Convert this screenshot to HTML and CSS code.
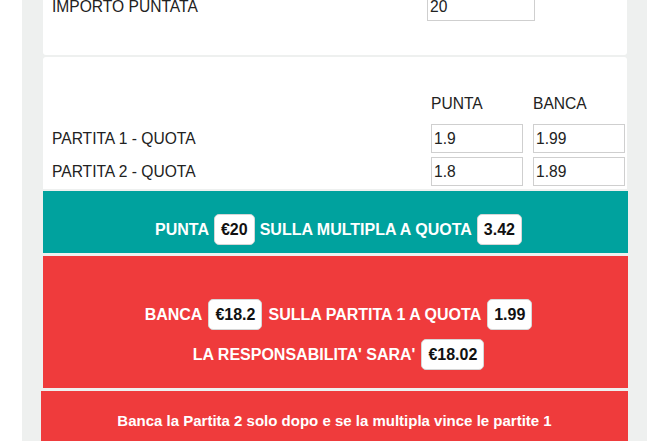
FILE: index.html
```html
<!DOCTYPE html>
<html lang="it">
<head>
    <meta charset="UTF-8">
    <meta name="viewport" content="width=device-width, initial-scale=1.0">
    <title>Calcolatore Multipla</title>
    <link rel="stylesheet" href="styles.css">
</head>
<body>
    <div class="page">
        <div class="card card-stake">
            <div class="stake-row">
                <label class="field-label" for="stake">IMPORTO PUNTATA</label>
                <input class="field stake-field" id="stake" type="text" value="20">
            </div>
        </div>

        <div class="card card-odds">
            <div class="odds-grid">
                <span></span>
                <span class="col-head">PUNTA</span>
                <span class="col-head">BANCA</span>

                <label class="field-label">PARTITA 1 - QUOTA</label>
                <input class="field" type="text" value="1.9">
                <input class="field" type="text" value="1.99">

                <label class="field-label">PARTITA 2 - QUOTA</label>
                <input class="field" type="text" value="1.8">
                <input class="field" type="text" value="1.89">
            </div>
        </div>

        <div class="result result-back">
            <div class="result-line">
                <span>PUNTA</span>
                <span class="pill">€20</span>
                <span>SULLA MULTIPLA A QUOTA</span>
                <span class="pill">3.42</span>
            </div>
        </div>

        <div class="result result-lay">
            <div class="result-line">
                <span>BANCA</span>
                <span class="pill">€18.2</span>
                <span>SULLA PARTITA 1 A QUOTA</span>
                <span class="pill">1.99</span>
            </div>
            <div class="result-line">
                <span>LA RESPONSABILITA' SARA'</span>
                <span class="pill">€18.02</span>
            </div>
        </div>

        <div class="result result-note">
            <p>Banca la Partita 2 solo dopo e se la multipla vince le partite 1</p>
        </div>
    </div>
</body>
</html>
```

FILE: styles.css
```css
* { margin: 0; padding: 0; box-sizing: border-box; }

body {
    background: #fff;
    font-family: "Liberation Sans", Arial, sans-serif;
    color: #222;
    overflow: hidden;
}

.page {
    width: 625px;
    margin: -8px 0 0 22px;
    padding: 0 20px 0 21px;
    background: #eef0ef;
    min-height: 480px;
}

/* White cards */
.card {
    background: #fff;
    border-radius: 0 0 3px 3px;
}

.card-stake {
    padding: 0 9px 34px;
    margin-bottom: 2px;
}

.stake-row {
    display: flex;
    align-items: center;
}

.stake-row .field-label { width: 375px; }

.field-label {
    font-size: 15.6px;
}

.field {
    height: 29px;
    border: 1px solid #cfcfcf;
    font-family: inherit;
    font-size: 15.6px;
    color: #222;
    padding: 0 2px;
    background: #fff;
    outline: none;
}

.stake-field { width: 108px; }

.card-odds {
    padding: 37px 2px 3px 9px;
    border-radius: 3px 3px 0 0;
    margin-bottom: 2px;
}

.odds-grid {
    display: grid;
    grid-template-columns: 1fr 92px 92px;
    column-gap: 10px;
    row-gap: 4px;
    align-items: center;
}

.col-head {
    font-size: 15.6px;
    height: 20px;
    line-height: 20px;
    margin-bottom: 6px;
}

/* Coloured result boxes */
.result {
    color: #fff;
    font-weight: bold;
    font-size: 16px;
    margin-right: -1px;
}

.result-back {
    background: #00a29e;
    padding: 23px 0 8px 6px;
}

.result-back .result-line { gap: 5px; }

.result-lay {
    background: #ef3b3c;
    margin-top: 3px;
    padding: 43px 0 18px 6px;
    display: flex;
    flex-direction: column;
    gap: 9px;
}

.result-note {
    background: #ef3b3c;
    margin-top: 3px;
    margin-left: -2px;
    padding: 21px 0 30px;
    text-align: center;
    line-height: 18px;
    font-size: 15px;
}

.result-line {
    display: flex;
    justify-content: center;
    align-items: center;
    gap: 6px;
}

.pill {
    display: inline-flex;
    align-items: center;
    height: 31px;
    padding: 0 6px;
    background: #fff;
    color: #111;
    border: 1px solid #d6d6d6;
    border-radius: 5px;
}
```
